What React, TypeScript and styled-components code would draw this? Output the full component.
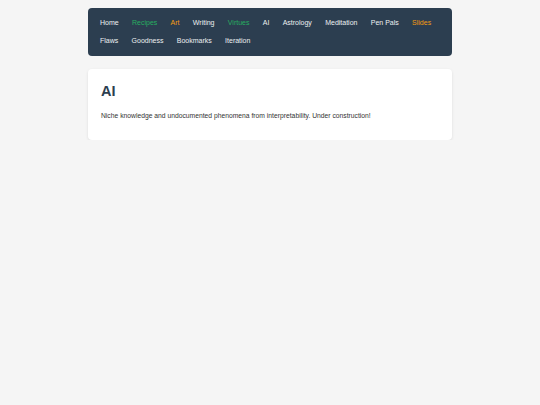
import React, { FC } from 'react';
import styled, { createGlobalStyle } from 'styled-components';

const GlobalStyle = createGlobalStyle`
  html, body {
    margin: 0;
    padding: 0;
    background: #f5f5f5;
    font-family: "Liberation Sans", Arial, sans-serif;
  }
`;

const Page = styled.div`
  width: 364px;
  margin: 0 auto;
  padding-top: 8px;
`;

const Nav = styled.nav`
  background: #2c3e50;
  border-radius: 4px;
  padding: 6px 12px;
  display: flex;
  flex-wrap: wrap;
  column-gap: 13.3px;
  margin-bottom: 13px;
`;

type Tone = 'plain' | 'green' | 'orange';

const toneColor: Record<Tone, string> = {
  plain: '#ecf0f1',
  green: '#27ae60',
  orange: '#f39c12',
};

const NavLink = styled.a<{ $tone: Tone }>`
  display: block;
  padding: 3px 0;
  font-size: 7px;
  line-height: 12px;
  color: ${(p) => toneColor[p.$tone]};
  text-decoration: none;
  cursor: pointer;
`;

const Card = styled.section`
  background: #ffffff;
  border-radius: 4px;
  box-shadow: 0 1px 3px rgba(0, 0, 0, 0.1);
  padding: 14px 13px 20px;
`;

const Title = styled.h1`
  margin: 0 0 13px;
  font-size: 14.5px;
  line-height: 16px;
  font-weight: bold;
  color: #2c3e50;
`;

const Text = styled.p`
  margin: 0;
  font-size: 6.75px;
  line-height: 8px;
  color: #333333;
`;

const links: { label: string; tone: Tone }[] = [
  { label: 'Home', tone: 'plain' },
  { label: 'Recipes', tone: 'green' },
  { label: 'Art', tone: 'orange' },
  { label: 'Writing', tone: 'plain' },
  { label: 'Virtues', tone: 'green' },
  { label: 'AI', tone: 'plain' },
  { label: 'Astrology', tone: 'plain' },
  { label: 'Meditation', tone: 'plain' },
  { label: 'Pen Pals', tone: 'plain' },
  { label: 'Slides', tone: 'orange' },
  { label: 'Flaws', tone: 'plain' },
  { label: 'Goodness', tone: 'plain' },
  { label: 'Bookmarks', tone: 'plain' },
  { label: 'Iteration', tone: 'plain' },
];

const App: FC = () => {
  return (
    <>
      <GlobalStyle />
      <Page>
        <Nav>
          {links.map((l) => (
            <NavLink key={l.label} $tone={l.tone}>
              {l.label}
            </NavLink>
          ))}
        </Nav>
        <Card>
          <Title>AI</Title>
          <Text>Niche knowledge and undocumented phenomena from interpretability. Under construction!</Text>
        </Card>
      </Page>
    </>
  );
};

export default App;
